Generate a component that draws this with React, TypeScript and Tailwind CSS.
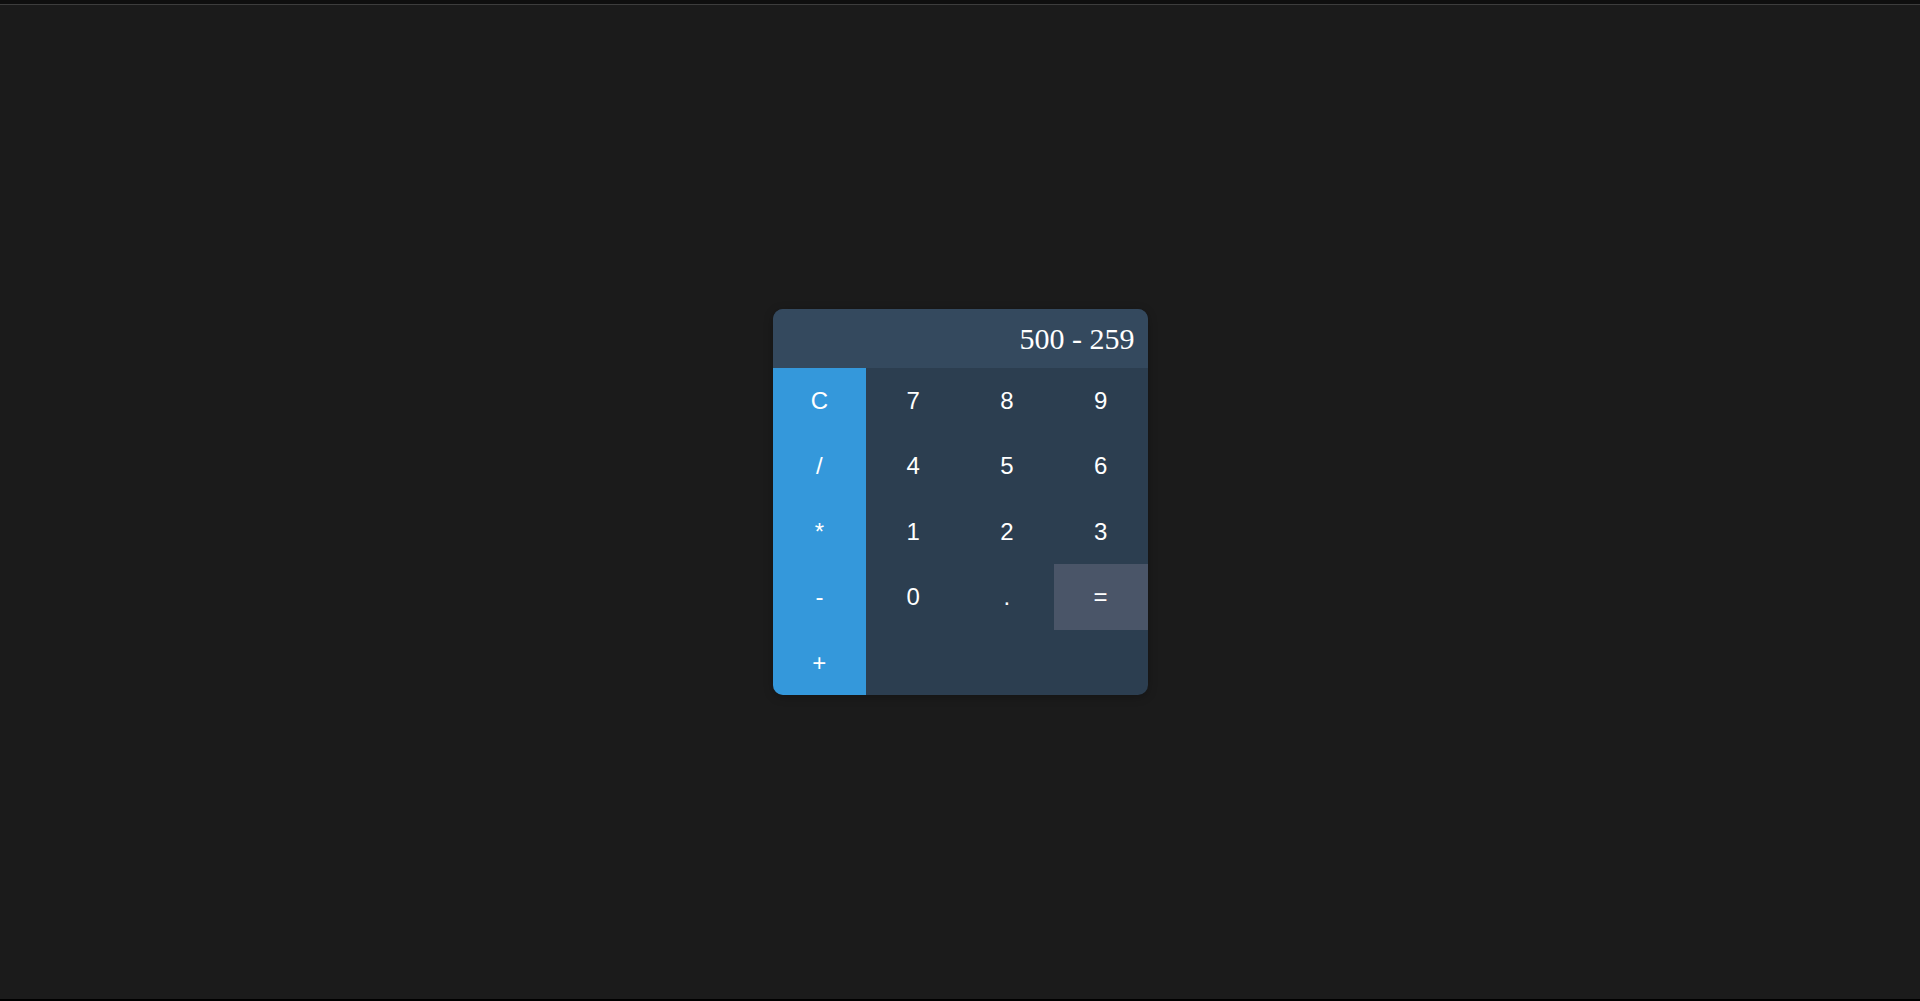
import React from "react";

const ops = ["C", "/", "*", "-", "+"];
const keys = ["7", "8", "9", "4", "5", "6", "1", "2", "3", "0", ".", "="];

export default function App() {
  return (
    <div className="flex h-[1001px] w-full flex-col bg-[#1b1b1b]">
      <div className="h-[4px] bg-[#0f0f0f]" />
      <div className="h-[1px] bg-[#3d3d3d]" />
      <main className="flex flex-1 items-center justify-center">
        <div className="w-[375px] overflow-hidden rounded-[10px] bg-[#2c3e50] shadow-[0_2px_10px_rgba(0,0,0,0.25)]">
          <div className="flex h-[59px] items-center justify-end bg-[#34495e] pr-[13px] [font-family:Liberation_Serif,Times_New_Roman,serif] text-[30px] text-white">
            500 - 259
          </div>
          <div className="flex [font-family:Liberation_Sans,Arial,sans-serif] text-[24px] text-white">
            <div className="flex w-1/4 flex-col bg-[#3498db]">
              {ops.map((op) => (
                <button key={op} className="flex h-[65.5px] items-center justify-center">
                  {op}
                </button>
              ))}
            </div>
            <div className="grid w-3/4 grid-cols-3 auto-rows-[65.5px]">
              {keys.map((k) => (
                <button
                  key={k}
                  className={
                    k === "="
                      ? "flex items-center justify-center bg-[#4a5568]"
                      : "flex items-center justify-center"
                  }
                >
                  {k}
                </button>
              ))}
            </div>
          </div>
        </div>
      </main>
      <div className="h-[2px] bg-black" />
    </div>
  );
}
